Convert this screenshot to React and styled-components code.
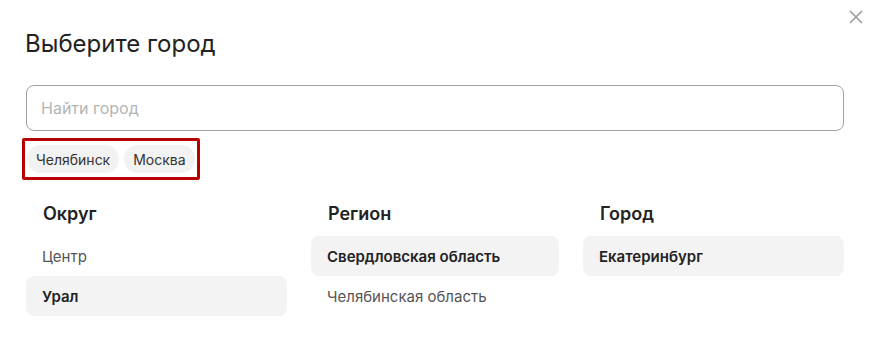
import React from "react";
import styled, { createGlobalStyle } from "styled-components";

const Global = createGlobalStyle`
  html, body { margin: 0; padding: 0; background: #fff; }
  * { box-sizing: border-box; }
  body { font-family: Inter, "Noto Sans", sans-serif; }
`;

const Modal = styled.div`
  position: relative;
  width: 875px;
  height: 352px;
  padding: 30px 31px 0 26px;
  background: #fff;
  overflow: hidden;
`;

const Close = styled.button`
  position: absolute;
  top: 9px;
  right: 11px;
  width: 16px;
  height: 16px;
  padding: 0;
  border: 0;
  background: transparent;
  display: flex;
  align-items: center;
  justify-content: center;
  cursor: pointer;
`;

const Title = styled.h2`
  margin: 0 0 0 -1px;
  font-size: 24px;
  line-height: 28px;
  font-weight: 400;
  color: #222;
`;

const Search = styled.input`
  display: block;
  width: 100%;
  height: 46px;
  margin-top: 27px;
  padding: 0 14px;
  border: 1px solid #a3a3a3;
  border-radius: 8px;
  font-family: inherit;
  font-size: 16px;
  color: #222;
  outline: none;
  &::placeholder { color: #b4b4b4; }
`;

const Highlight = styled.div`
  display: inline-flex;
  gap: 5px;
  margin: 7px 0 0 -4px;
  padding: 4px 2px;
  border: 3px solid #b80000;
  border-radius: 2px;
`;

const Chip = styled.span`
  display: inline-flex;
  align-items: center;
  height: 28px;
  padding: 0 9px;
  border-radius: 14px;
  background: #f2f2f2;
  font-size: 14px;
  color: #333;
`;

const Columns = styled.div`
  display: grid;
  grid-template-columns: 261px 248px 261px;
  column-gap: 24px;
  margin-top: 23px;
`;

const Column = styled.div`
  display: flex;
  flex-direction: column;
`;

const Heading = styled.div`
  height: 22px;
  line-height: 22px;
  margin-bottom: 11px;
  padding-left: 17px;
  font-size: 18px;
  font-weight: 600;
  color: #222;
`;

const Item = styled.div`
  height: 40px;
  display: flex;
  align-items: center;
  padding-left: 16px;
  border-radius: 8px;
  font-size: 15px;
  background: ${(p) => (p.$active ? "#f3f3f3" : "transparent")};
  font-weight: ${(p) => (p.$active ? 600 : 400)};
  color: ${(p) => (p.$active ? "#222" : "#555")};
`;

const data = [
  { title: "Округ", items: [["Центр", false], ["Урал", true]] },
  { title: "Регион", items: [["Свердловская область", true], ["Челябинская область", false]] },
  { title: "Город", items: [["Екатеринбург", true]] },
];

export default function App() {
  return (
    <>
      <Global />
      <Modal>
        <Close aria-label="Закрыть">
          <svg width="14" height="14" viewBox="0 0 14 14">
            <path d="M1 1L13 13M13 1L1 13" stroke="#9a9a9a" strokeWidth="1.6" />
          </svg>
        </Close>
        <Title>Выберите город</Title>
        <Search placeholder="Найти город" />
        <Highlight>
          <Chip>Челябинск</Chip>
          <Chip>Москва</Chip>
        </Highlight>
        <Columns>
          {data.map((col) => (
            <Column key={col.title}>
              <Heading>{col.title}</Heading>
              {col.items.map(([name, active]) => (
                <Item key={name} $active={active}>{name}</Item>
              ))}
            </Column>
          ))}
        </Columns>
      </Modal>
    </>
  );
}
